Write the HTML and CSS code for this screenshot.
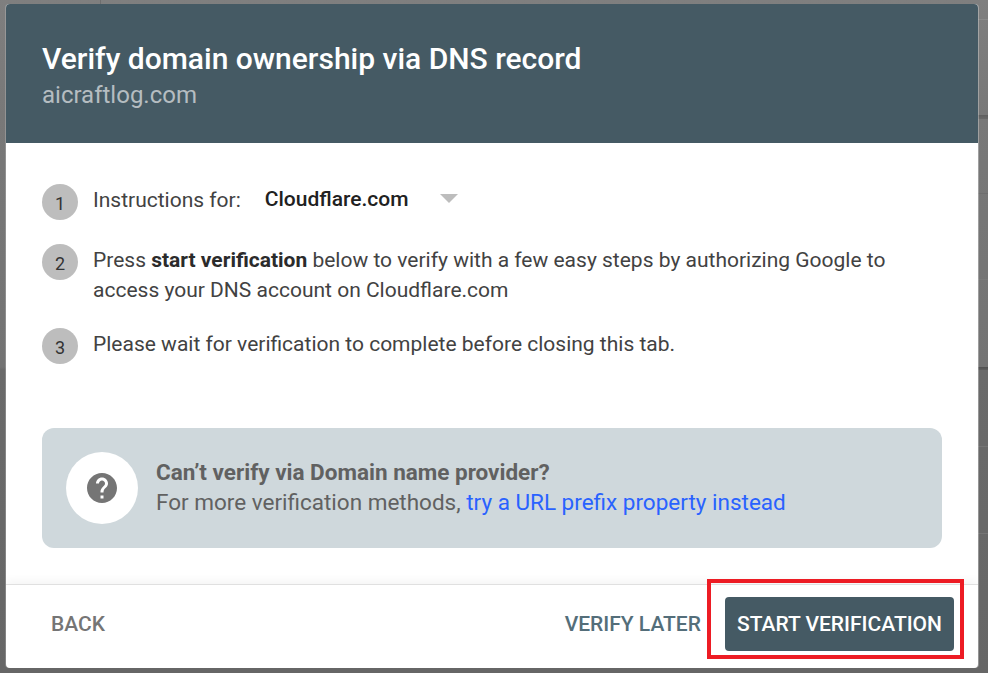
FILE: index.html
```html
<!DOCTYPE html>
<html lang="en">
<head>
<meta charset="utf-8">
<title>Verify domain ownership via DNS record</title>
<link rel="stylesheet" href="styles.css">
</head>
<body>
<div class="dialog">
  <header class="head">
    <div class="title">Verify domain ownership via DNS record</div>
    <div class="domain">aicraftlog.com</div>
  </header>
  <main class="content">
    <div class="step step-one">
      <span class="num">1</span>
      <span class="label">Instructions for:</span>
      <span class="select">Cloudflare.com</span>
      <svg class="caret" width="18" height="9" viewBox="0 0 18 9"><path d="M0 0h18L9 9z" fill="#bdbdbd"/></svg>
    </div>
    <div class="step step-two">
      <span class="num">2</span>
      <p class="text">Press <b>start verification</b> below to verify with a few easy steps by authorizing Google to access your DNS account on Cloudflare.com</p>
    </div>
    <div class="step step-three">
      <span class="num">3</span>
      <p class="text">Please wait for verification to complete before closing this tab.</p>
    </div>
    <div class="hint">
      <span class="hint-icon">
        <svg width="36" height="36" viewBox="2 2 20 20"><path fill="#757575" d="M12 2C6.48 2 2 6.48 2 12s4.48 10 10 10 10-4.48 10-10S17.52 2 12 2zm1 17h-2v-2h2v2zm2.07-7.75l-.9.92C13.45 12.9 13 13.5 13 15h-2v-.5c0-1.1.45-2.1 1.17-2.83l1.24-1.26c.37-.36.59-.86.59-1.41 0-1.1-.9-2-2-2s-2 .9-2 2H8c0-2.21 1.79-4 4-4s4 1.79 4 4c0 .88-.36 1.68-.93 2.25z"/></svg>
      </span>
      <div class="hint-text">
        <div class="hint-title">Can’t verify via Domain name provider?</div>
        <div class="hint-body">For more verification methods, <a class="link">try a URL prefix property instead</a></div>
      </div>
    </div>
  </main>
  <footer class="foot">
    <span class="btn back">BACK</span>
    <span class="btn later">VERIFY LATER</span>
    <span class="btn primary">START VERIFICATION</span>
  </footer>
</div>
<div class="highlight"></div>
</body>
</html>
```
FILE: styles.css
```css
html, body { margin: 0; height: 673px; overflow: hidden; }
body {
  background:
    linear-gradient(#8a8a8a, #8a8a8a) right 0 top 19px / 10px 1px no-repeat,
    linear-gradient(#5f5f5f, #6a6a6a) right 0 top 115px / 10px 4px no-repeat,
    linear-gradient(#6e6e6e, #6e6e6e) right 0 top 193px / 10px 1px no-repeat,
    linear-gradient(#7a7a7a, #7a7a7a) right 0 top 279px / 10px 1px no-repeat,
    linear-gradient(#4f4f4f, #5f5f5f) right 0 top 367px / 10px 3px no-repeat,
    linear-gradient(#757575, #757575) right 0 top 446px / 10px 1px no-repeat,
    linear-gradient(#757575, #757575) right 0 top 533px / 10px 1px no-repeat,
    linear-gradient(#6e6e6e, #6e6e6e) 100px 0 / 1px 4px no-repeat,
    linear-gradient(#7f7f7f 0, #787878 115px, #737373 367px, #6a6a6a 370px, #666 100%);
  font-family: Roboto, sans-serif;
  padding: 4px 10px 5px 6px;
  box-sizing: border-box;
}
.dialog {
  width: 972px;
  height: 664px;
  background: #fff;
  border-radius: 4px;
  overflow: hidden;
  display: flex;
  flex-direction: column;
  box-shadow: 1px 0 0 rgba(255,255,255,.3), -1px 0 0 rgba(255,255,255,.2);
}
.head {
  height: 139px;
  box-sizing: border-box;
  background: #455a64;
  padding: 37px 36px 0;
}
.title { font-size: 30px; line-height: 36px; font-weight: 500; color: #fff; }
.domain { font-size: 24px; line-height: 36px; color: #b5bdc1; }
.content { flex: 1; padding: 41px 36px 0; box-sizing: border-box; }
.step { display: flex; color: #424242; font-size: 21px; line-height: 30px; }
.step-one { align-items: flex-start; height: 36px; }
.step-two { margin-top: 24px; }
.step-three { margin-top: 23px; }
.num {
  flex: none;
  width: 36px; height: 36px;
  border-radius: 50%;
  background: #bdbdbd;
  color: #333;
  display: flex; align-items: center; justify-content: center;
  font-size: 18px;
  margin-right: 15px;
  padding-top: 3px;
  box-sizing: border-box;
}
.label { margin-right: 24px; padding-top: 1px; }
.select { font-weight: 500; margin-right: 31px; color: #212121; }
.caret { margin-top: 10px; }
.text { margin: 0; padding-top: 1px; }
.text b { font-weight: 700; color: #2b2b2b; }
.hint {
  margin-top: 64px;
  height: 120px;
  box-sizing: border-box;
  background: #cfd8dc;
  border-radius: 12px;
  display: flex;
  align-items: center;
  padding-left: 24px;
}
.hint-icon {
  width: 72px; height: 72px;
  border-radius: 50%;
  background: #fff;
  display: flex; align-items: center; justify-content: center;
  margin-right: 18px;
}
.hint-icon svg { display: block; width: 30px; height: 30px; }
.hint-text { font-size: 22.5px; line-height: 30px; color: #616161; margin-top: -2px; }
.hint-title { font-weight: 700; }
.link { color: #2962ff; }
.foot {
  height: 84px;
  box-sizing: border-box;
  flex: none;
  border-top: 1px solid #e0e0e0;
  box-shadow: 0 -4px 8px rgba(0,0,0,.04);
  display: flex;
  align-items: center;
  padding: 0 24px 5px 45px;
}
.btn { font-size: 21px; font-weight: 500; color: #757575; }
.back { margin-right: auto; }
.later { color: #546e7a; margin-right: 24px; }
.primary {
  background: #455a64;
  color: #fff;
  border-radius: 4px;
  height: 54px;
  padding: 0 12px;
  display: flex;
  align-items: center;
}
.highlight {
  position: absolute;
  left: 707px; top: 579px;
  width: 257px; height: 80px;
  box-sizing: border-box;
  border: 4px solid #ed1c24;
}
```
